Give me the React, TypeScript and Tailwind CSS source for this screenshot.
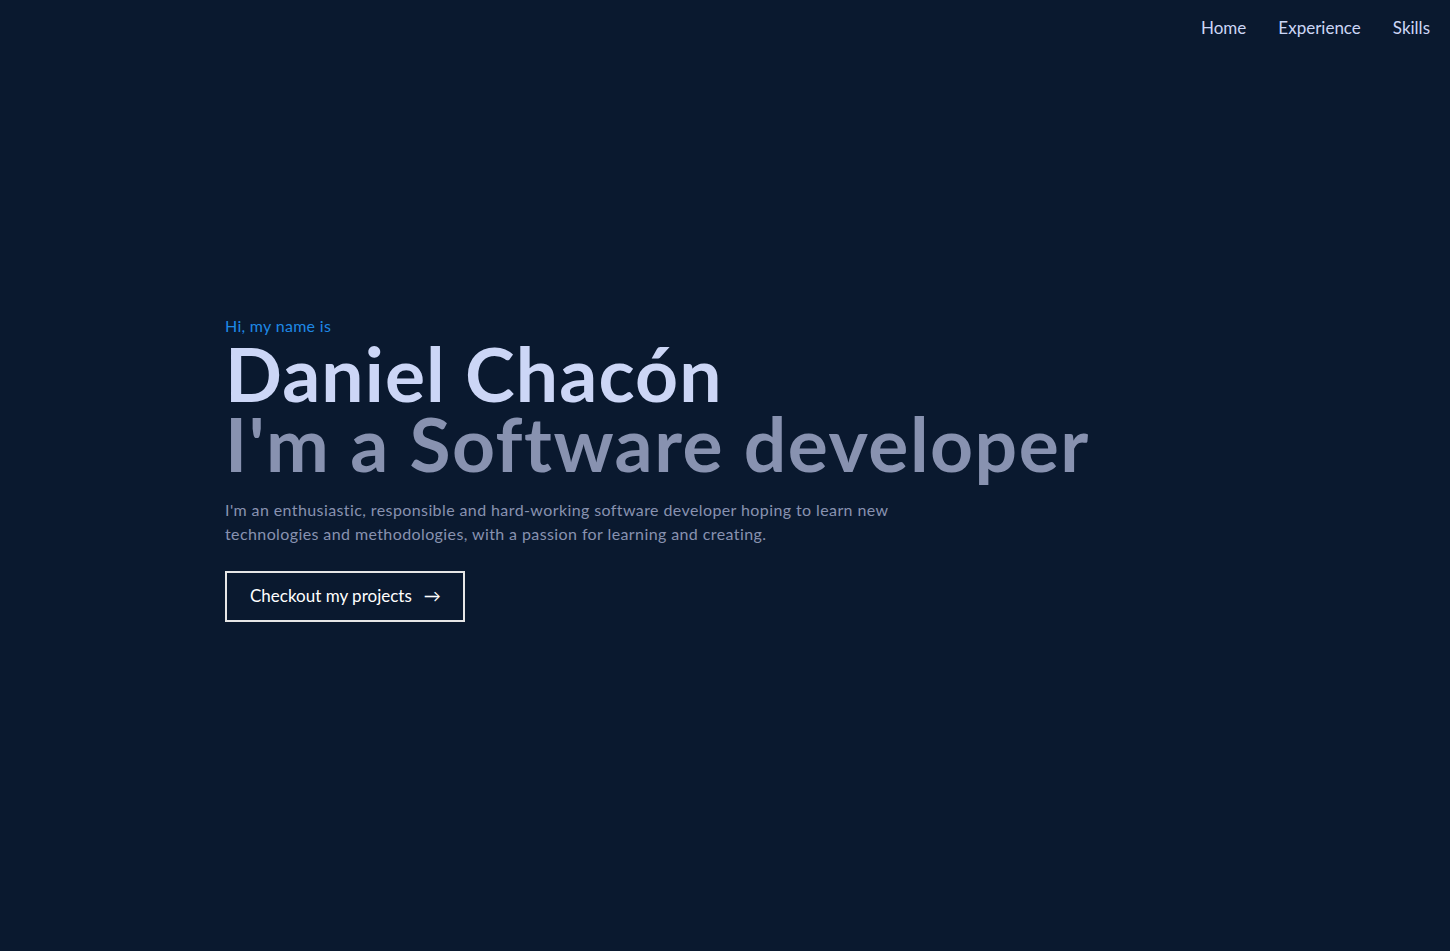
import React from "react";

export default function App() {
  const font = { fontFamily: "Lato, 'Open Sans', sans-serif" };
  return (
    <div className="min-h-[951px] w-full bg-[#0a192f] flex flex-col" style={font}>
      <nav className="flex justify-end gap-8 pr-5 pt-[15px] text-[17px] text-[#ccd6f6]">
        <a>Home</a>
        <a>Experience</a>
        <a>Skills</a>
      </nav>
      <main className="pl-[225px] pt-[273px]">
        <p className="text-[16px] leading-[24px] tracking-[0.3px] text-[#1e88e5]">Hi, my name is</p>
        <h1 className="text-[75px] leading-[70px] font-bold tracking-[1.1px] text-[#ccd6f6]">Daniel Chacón</h1>
        <h2 className="text-[75px] leading-[70px] font-bold tracking-[1.5px] text-[#8892b0]">I'm a Software developer</h2>
        <p className="mt-[20px] max-w-[700px] text-[16px] leading-[24px] tracking-[0.4px] text-[#8892b0]">
          I'm an enthusiastic, responsible and hard-working software developer hoping to learn new technologies and
          methodologies, with a passion for learning and creating.
        </p>
        <button className="mt-[25px] flex h-[51px] w-[240px] items-center gap-[12px] border-2 border-[#e6e6e6] pl-[23px] text-[17px] text-white">
          <span>Checkout my projects</span>
          <span>→</span>
        </button>
      </main>
    </div>
  );
}
